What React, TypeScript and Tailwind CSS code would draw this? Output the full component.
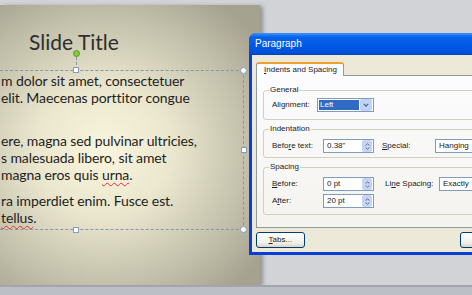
import React from 'react';

const dlgFont = { fontFamily: '"Liberation Sans", Arial, sans-serif' };
const slideFont = { fontFamily: 'Lato, "Open Sans", sans-serif' };

function Spinner() {
    return (
        <div className="ml-auto mr-[1px] flex h-[12px] w-[10px] flex-col justify-center gap-[1px] rounded-[2px] bg-[#c6d4f6]">
            <svg viewBox="0 0 8 4" className="mx-auto h-[3px] w-[5px]">
                <path d="M1 3.5 L4 0.8 L7 3.5" fill="none" stroke="#4d6185" strokeWidth="1.4" />
            </svg>
            <svg viewBox="0 0 8 4" className="mx-auto h-[3px] w-[5px]">
                <path d="M1 0.5 L4 3.2 L7 0.5" fill="none" stroke="#4d6185" strokeWidth="1.4" />
            </svg>
        </div>
    );
}

function SpinInput({ value }: { value: string }) {
    return (
        <div className="flex h-[14px] w-[51px] items-center border border-[#7f9db9] bg-white pl-[3px] text-[#222]">
            <span>{value}</span>
            <Spinner />
        </div>
    );
}

function Group({ title, children, pt, pb }: { title: string; children: React.ReactNode; pt: string; pb: string }) {
    return (
        <fieldset className="rounded-[3px] border border-[#d0d0bf] px-0">
            <legend className="ml-[5px] px-[1px] leading-[10px] text-[#222]">{title}</legend>
            <div className={`pl-[8px] ${pt} ${pb}`}>{children}</div>
        </fieldset>
    );
}

export default function App() {
    return (
        <div className="relative flex h-[295px] w-[472px] flex-col overflow-hidden bg-[#d2d3d6]">
            {/* slide */}
            <div
                className="mt-[5px] flex h-[280px] w-[260px] shrink-0 flex-col bg-[radial-gradient(ellipse_75%_65%_at_40%_52%,#faf5dd_0%,#ebe7cf_35%,#c4c1ac_72%,#a5a390_100%)] shadow-[3px_1px_4px_rgba(0,0,0,0.3)]"
                style={slideFont}
            >
                <div className="w-[148px] pt-[24px] text-center text-[21px] leading-[25px] text-[#2e2e2e]">Slide Title</div>

                <div className="relative mt-[16px] ml-[-10px] h-[160px] w-[254px] border border-dashed border-[#8797ad]">
                    {/* rotate handle */}
                    <div className="absolute left-[82px] top-[-21px] h-[7px] w-[7px] rounded-full border border-[#5a9a2a] bg-[#7fcb3c]" />
                    <div className="absolute left-[85px] top-[-14px] h-[13px] border-l border-dashed border-[#8797ad]" />
                    {/* sizing handles */}
                    <div className="absolute left-[82px] top-[-4px] h-[6px] w-[6px] border border-[#8a9bb5] bg-white" />
                    <div className="absolute right-[-4px] top-[-4px] h-[7px] w-[7px] rounded-full border border-[#8a9bb5] bg-white" />
                    <div className="absolute right-[-4px] top-[76px] h-[6px] w-[6px] border border-[#8a9bb5] bg-white" />
                    <div className="absolute bottom-[-4px] right-[-4px] h-[7px] w-[7px] rounded-full border border-[#8a9bb5] bg-white" />
                    <div className="absolute bottom-[-4px] left-[82px] h-[6px] w-[6px] border border-[#8a9bb5] bg-white" />

                    <div className="whitespace-nowrap pl-[10px] pt-[1px] text-[14px] leading-[17px] tracking-[-0.1px] text-[#1e1e1e]">
                        <p className="mb-[26px]">
                            m dolor sit amet, consectetuer
                            <br />
                            elit. Maecenas porttitor congue
                        </p>
                        <p className="mb-[9px]">
                            ere, magna sed pulvinar ultricies,
                            <br />
                            s malesuada libero, sit amet
                            <br />
                            magna eros quis <span className="underline decoration-wavy decoration-[#e03030] decoration-1 underline-offset-2">urna</span>.
                        </p>
                        <p>
                            ra imperdiet enim. Fusce est.
                            <br />
                            <span className="underline decoration-wavy decoration-[#e03030] decoration-1 underline-offset-2">tellus</span>.
                        </p>
                    </div>
                </div>
            </div>
            <div className="h-[10px] border-t-2 border-[#a2a6ac] bg-[#bcc0c6]" />

            {/* Paragraph dialog */}
            <div
                className="absolute left-[249px] top-[33px] flex h-[222px] w-[250px] flex-col rounded-t-[7px] bg-[#0a3ed8] text-[8px] leading-[10px]"
                style={dlgFont}
            >
                <div className="flex h-[22px] shrink-0 items-center rounded-t-[7px] bg-[linear-gradient(to_bottom,#3d95ff_0%,#0a62ea_18%,#0058e6_60%,#0050d8_90%,#003fc0_100%)] pl-[6px] text-[10px] font-medium text-white">
                    Paragraph
                </div>
                <div className="mx-[3px] mb-[3px] flex flex-1 flex-col bg-[#ece9d8] pl-[4px]">
                    {/* tab */}
                    <div className="relative z-10 mt-[7px] mb-[-1px] flex h-[14px] w-[88px] items-start rounded-t-[3px] border-x border-t-2 border-x-[#919b9c] border-t-[#f0a030] bg-[#fcfcfe] pl-[7px] pt-[1px] text-[#222]">
                        <span>
                            <span className="underline">I</span>ndents and Spacing
                        </span>
                    </div>
                    {/* panel */}
                    <div className="flex h-[153px] flex-col gap-[4px] border border-[#919b9c] bg-[linear-gradient(to_bottom,#fcfcfe,#f4f3ee)] pl-[6px] pt-[9px]">
                        <Group title="General" pt="pt-[3px]" pb="pb-[7px]">
                            <div className="flex items-center text-[#222]">
                                <span className="w-[45px]">Alignment:</span>
                                <div className="flex h-[14px] w-[57px] items-center border border-[#7f9db9] bg-white pl-[1px]">
                                    <span className="h-[10px] w-[40px] bg-[#316ac5] pl-[1px] text-white">Left</span>
                                    <div className="ml-auto mr-[1px] flex h-[12px] w-[12px] items-center justify-center rounded-[2px] bg-[#c1d2f8]">
                                        <svg viewBox="0 0 8 5" className="h-[4px] w-[6px]">
                                            <path d="M1 1 L4 4 L7 1" fill="none" stroke="#4d6185" strokeWidth="1.6" />
                                        </svg>
                                    </div>
                                </div>
                            </div>
                        </Group>

                        <Group title="Indentation" pt="pt-[5px]" pb="pb-[4px]">
                            <div className="flex items-center text-[#222]">
                                <span className="w-[51px]">
                                    Befo<span className="underline">r</span>e text:
                                </span>
                                <SpinInput value="0.38&quot;" />
                                <span className="ml-[8px] w-[53px]">
                                    <span className="underline">S</span>pecial:
                                </span>
                                <div className="flex h-[14px] w-[60px] items-center border border-[#7f9db9] bg-white pl-[3px]">Hanging</div>
                            </div>
                        </Group>

                        <Group title="Spacing" pt="pt-[5px]" pb="pb-[6px]">
                            <div className="flex flex-col gap-[3px] text-[#222]">
                                <div className="flex items-center">
                                    <span className="w-[51px]">
                                        <span className="underline">B</span>efore:
                                    </span>
                                    <SpinInput value="0 pt" />
                                    <span className="ml-[11px] w-[54px]">
                                        Li<span className="underline">n</span>e Spacing:
                                    </span>
                                    <div className="flex h-[14px] w-[60px] items-center border border-[#7f9db9] bg-white pl-[3px]">Exactly</div>
                                </div>
                                <div className="flex items-center">
                                    <span className="w-[51px]">
                                        A<span className="underline">f</span>ter:
                                    </span>
                                    <SpinInput value="20 pt" />
                                </div>
                            </div>
                        </Group>
                    </div>
                    {/* buttons */}
                    <div className="mt-[4px] flex">
                        <div className="flex h-[16px] w-[54px] items-center justify-center rounded-[3px] border border-[#003c74] bg-[linear-gradient(to_bottom,#ffffff,#f0f0ea_70%,#d8d4c6)] text-[#222]">
                            <span>
                                <span className="underline">T</span>abs...
                            </span>
                        </div>
                        <div className="ml-[155px] h-[16px] w-[40px] rounded-[3px] border border-[#003c74] bg-[linear-gradient(to_bottom,#ffffff,#f0f0ea_70%,#d8d4c6)]" />
                    </div>
                </div>
            </div>
        </div>
    );
}
